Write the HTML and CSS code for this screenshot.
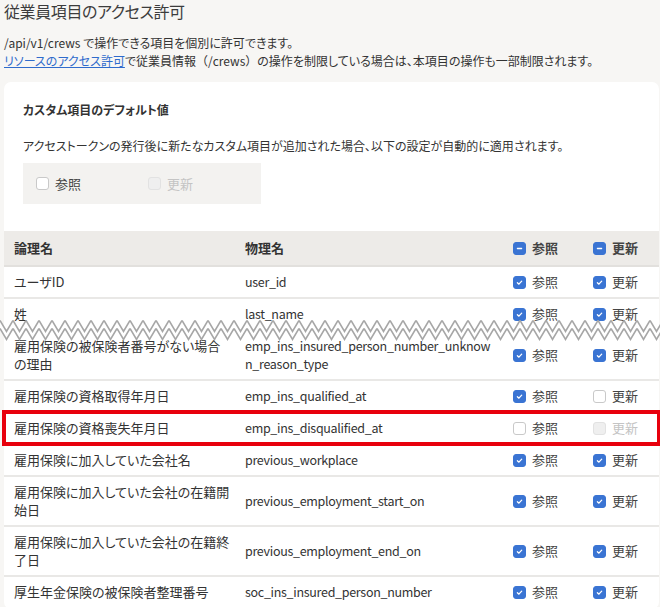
FILE: index.html
```html
<!DOCTYPE html>
<html lang="ja">
<head>
    <meta charset="UTF-8">
    <meta name="viewport" content="width=device-width, initial-scale=1.0">
    <title>従業員項目のアクセス許可</title>
    <link rel="stylesheet" href="styles.css">
</head>
<body>
    <div class="page">
        <h1 class="title">従業員項目のアクセス許可</h1>
        <p class="lead">
            /api/v1/crews で操作できる項目を個別に許可できます。<br>
            <a href="#">リソースのアクセス許可</a>で従業員情報<span class="paren">（/crews）</span>の操作を制限している場合は、本項目の操作も一部制限されます。
        </p>

        <section class="card">
            <div class="card-body">
                <h2>カスタム項目のデフォルト値</h2>
                <p>アクセストークンの発行後に新たなカスタム項目が追加された場合、以下の設定が自動的に適用されます。</p>
                <div class="defaults">
                    <label class="check"><span class="box"></span>参照</label>
                    <label class="check disabled"><span class="box"></span>更新</label>
                </div>
            </div>

            <div class="table-wrap">
                <table class="fields">
                    <thead>
                        <tr>
                            <th class="col-name">論理名</th>
                            <th class="col-key">物理名</th>
                            <th class="col-read"><span class="check"><span class="box on"><svg viewBox="0 0 13 13"><path d="M4 6.5h5"/></svg></span>参照</span></th>
                            <th class="col-write"><span class="check"><span class="box on"><svg viewBox="0 0 13 13"><path d="M4 6.5h5"/></svg></span>更新</span></th>
                        </tr>
                    </thead>
                    <tbody>
                        <tr>
                            <td>ユーザID</td>
                            <td>user_id</td>
                            <td><span class="check"><span class="box on"><svg viewBox="0 0 13 13"><path d="M4 6.8l1.8 1.7 3.3-3.6"/></svg></span>参照</span></td>
                            <td><span class="check"><span class="box on"><svg viewBox="0 0 13 13"><path d="M4 6.8l1.8 1.7 3.3-3.6"/></svg></span>更新</span></td>
                        </tr>
                        <tr>
                            <td>姓</td>
                            <td>last_name</td>
                            <td><span class="check"><span class="box on"><svg viewBox="0 0 13 13"><path d="M4 6.8l1.8 1.7 3.3-3.6"/></svg></span>参照</span></td>
                            <td><span class="check"><span class="box on"><svg viewBox="0 0 13 13"><path d="M4 6.8l1.8 1.7 3.3-3.6"/></svg></span>更新</span></td>
                        </tr>
                        <tr>
                            <td>雇用保険の被保険者番号がない場合の理由</td>
                            <td>emp_ins_insured_person_number_unknown_reason_type</td>
                            <td><span class="check"><span class="box on"><svg viewBox="0 0 13 13"><path d="M4 6.8l1.8 1.7 3.3-3.6"/></svg></span>参照</span></td>
                            <td><span class="check"><span class="box on"><svg viewBox="0 0 13 13"><path d="M4 6.8l1.8 1.7 3.3-3.6"/></svg></span>更新</span></td>
                        </tr>
                        <tr>
                            <td>雇用保険の資格取得年月日</td>
                            <td>emp_ins_qualified_at</td>
                            <td><span class="check"><span class="box on"><svg viewBox="0 0 13 13"><path d="M4 6.8l1.8 1.7 3.3-3.6"/></svg></span>参照</span></td>
                            <td><span class="check"><span class="box"></span>更新</span></td>
                        </tr>
                        <tr class="highlight">
                            <td>雇用保険の資格喪失年月日</td>
                            <td>emp_ins_disqualified_at</td>
                            <td><span class="check"><span class="box"></span>参照</span></td>
                            <td><span class="check disabled"><span class="box"></span>更新</span></td>
                        </tr>
                        <tr>
                            <td>雇用保険に加入していた会社名</td>
                            <td>previous_workplace</td>
                            <td><span class="check"><span class="box on"><svg viewBox="0 0 13 13"><path d="M4 6.8l1.8 1.7 3.3-3.6"/></svg></span>参照</span></td>
                            <td><span class="check"><span class="box on"><svg viewBox="0 0 13 13"><path d="M4 6.8l1.8 1.7 3.3-3.6"/></svg></span>更新</span></td>
                        </tr>
                        <tr>
                            <td>雇用保険に加入していた会社の在籍開始日</td>
                            <td>previous_employment_start_on</td>
                            <td><span class="check"><span class="box on"><svg viewBox="0 0 13 13"><path d="M4 6.8l1.8 1.7 3.3-3.6"/></svg></span>参照</span></td>
                            <td><span class="check"><span class="box on"><svg viewBox="0 0 13 13"><path d="M4 6.8l1.8 1.7 3.3-3.6"/></svg></span>更新</span></td>
                        </tr>
                        <tr>
                            <td>雇用保険に加入していた会社の在籍終了日</td>
                            <td>previous_employment_end_on</td>
                            <td><span class="check"><span class="box on"><svg viewBox="0 0 13 13"><path d="M4 6.8l1.8 1.7 3.3-3.6"/></svg></span>参照</span></td>
                            <td><span class="check"><span class="box on"><svg viewBox="0 0 13 13"><path d="M4 6.8l1.8 1.7 3.3-3.6"/></svg></span>更新</span></td>
                        </tr>
                        <tr>
                            <td>厚生年金保険の被保険者整理番号</td>
                            <td>soc_ins_insured_person_number</td>
                            <td><span class="check"><span class="box on"><svg viewBox="0 0 13 13"><path d="M4 6.8l1.8 1.7 3.3-3.6"/></svg></span>参照</span></td>
                            <td><span class="check"><span class="box on"><svg viewBox="0 0 13 13"><path d="M4 6.8l1.8 1.7 3.3-3.6"/></svg></span>更新</span></td>
                        </tr>
                    </tbody>
                </table>

                <!-- omitted rows marker -->
                <div class="tear">
                    <svg width="100%" height="24">
                        <defs>
                            <pattern id="zigzag" width="13" height="24" patternUnits="userSpaceOnUse">
                                <polygon points="0,1.5 6.5,12.5 13,1.5 13,9.5 6.5,20.5 0,9.5" fill="#fff"/>
                                <polyline points="0,1.5 6.5,12.5 13,1.5" fill="none" stroke="#a6a6a6" stroke-width="1.6"/>
                                <polyline points="0,9.5 6.5,20.5 13,9.5" fill="none" stroke="#a6a6a6" stroke-width="1.6"/>
                            </pattern>
                        </defs>
                        <rect width="100%" height="24" fill="url(#zigzag)"/>
                    </svg>
                </div>
            </div>
        </section>
    </div>
</body>
</html>
```

FILE: styles.css
```css
/* General */
body {
    margin: 0;
    background: #f7f6f4;
    color: #333;
    font-family: "Noto Sans CJK JP", sans-serif;
    font-size: 13px;
    font-feature-settings: "palt";
}

.page {
    padding: 1px 1px 0 4px;
}

.title {
    margin: 0;
    font-size: 16px;
    font-weight: normal;
    line-height: 20px;
    letter-spacing: -0.4px;
    color: #3c3c3c;
}

.lead {
    margin: 13px 0 0;
    font-size: 12px;
    line-height: 18px;
}

.lead a {
    color: #2f6bcc;
    text-decoration: underline;
}

.paren {
    font-feature-settings: normal;
}

/* Card */
.card {
    margin-top: 12px;
    background: #fff;
    border-radius: 7px;
}

.card-body {
    padding: 18px 19px 27px;
}

.card-body h2 {
    margin: 0;
    font-size: 12px;
    line-height: 19px;
}

.card-body p {
    margin: 17px 0 0;
    font-size: 12px;
    line-height: 19px;
}

.defaults {
    display: flex;
    align-items: center;
    width: 238px;
    height: 41px;
    margin-top: 8px;
    padding-left: 13px;
    box-sizing: border-box;
    background: #f3f2f0;
}

.defaults .check {
    width: 112px;
}

/* Checkbox */
.check {
    display: flex;
    align-items: center;
    gap: 6px;
    line-height: 18px;
    color: #444;
    white-space: nowrap;
}

.box {
    display: block;
    flex: none;
    width: 13px;
    height: 13px;
    box-sizing: border-box;
    border: 1px solid #c9c9c9;
    border-radius: 3px;
    background: #fff;
}

.box.on {
    border-color: #3a74d3;
    background: #3a74d3;
}

.box svg {
    display: block;
    width: 11px;
    height: 11px;
}

.box svg path {
    fill: none;
    stroke: #fff;
    stroke-width: 1.5;
    stroke-linecap: round;
    stroke-linejoin: round;
}

.check.disabled {
    color: #c4c4c4;
}

.check.disabled .box {
    border-color: #e2e2e2;
    background: #efefef;
}

/* Table */
.table-wrap {
    position: relative;
}

.fields {
    width: 100%;
    border-collapse: collapse;
    table-layout: fixed;
}

.fields th,
.fields td {
    height: 18px;
    padding: 6px 10px;
    line-height: 18px;
    text-align: left;
    vertical-align: middle;
    border-bottom: 2px solid #e9e8e6;
}

.fields th {
    padding: 8px 10px;
    background: #edebe8;
    font-weight: bold;
    border-bottom-color: #e2e0dd;
}

.fields td:first-child,
.fields th:first-child {
    padding-right: 0;
}

.fields td:nth-child(2),
.fields th:nth-child(2) {
    padding-left: 14px;
    word-break: break-all;
}

.fields td:nth-child(2) {
    font-size: 12.5px;
    letter-spacing: -0.3px;
}

.col-name { width: 217px; }
.col-key { width: 248px; }
.col-read { width: 60px; }

.fields tr.highlight {
    outline: 4px solid #e8000d;
    outline-offset: -2px;
}

.tear {
    position: absolute;
    top: 88px;
    left: -4px;
    width: 660px;
    height: 24px;
}

.tear svg {
    display: block;
}
```
